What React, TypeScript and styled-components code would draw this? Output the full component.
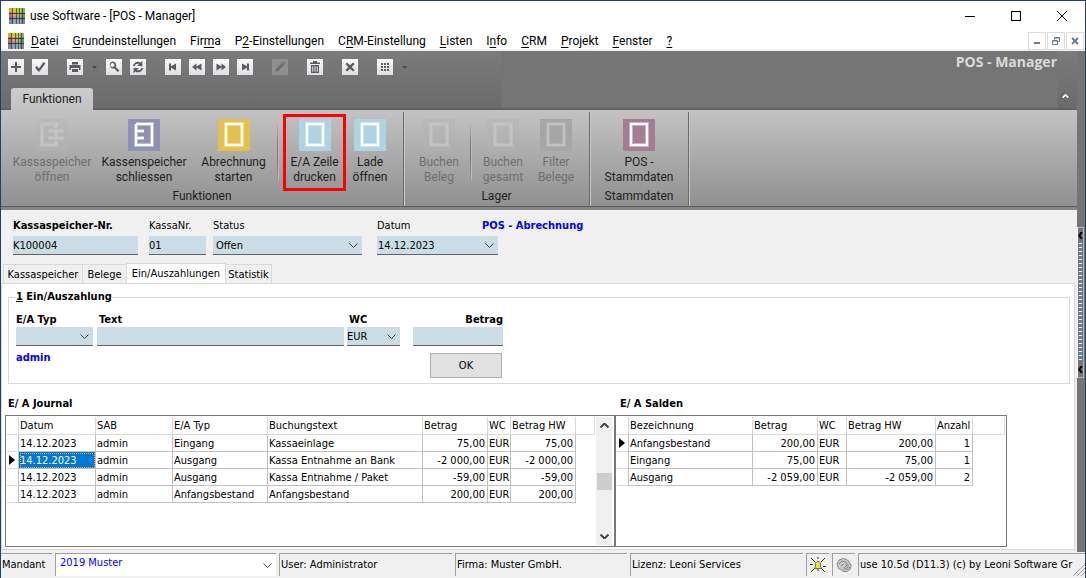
import React from "react";
import styled, { createGlobalStyle, css } from "styled-components";

const ui = `Roboto, "Open Sans", sans-serif`;
const form = `"DejaVu Sans Condensed", "DejaVu Sans", sans-serif`;
const c = {
  edge: "#1d4468",
  face: "#f0f0f0",
  dark: "#757575",
  line: "#d9d9d9",
  field: "#cadde6",
  rule: "#646464",
  blue: "#0000ff",
  grid: "#c0c0c0",
};

const Global = createGlobalStyle`
  * { box-sizing: border-box; }
  body { margin: 0; background: ${c.face}; color: #000; font: 11px/16px ${form}; }
  button, input, select { font: inherit; color: inherit; margin: 0; border-radius: 0; }
  button { padding: 0; border: 0; background: none; }
  svg { display: block; flex: none; }
`;

const Window = styled.div`
  display: flex;
  flex-direction: column;
  min-height: 100vh;
  border: 1px solid ${c.edge};
  background: ${c.face};
  overflow: hidden;
`;

/* ---------- title and menu ---------- */
const TitleBar = styled.header`
  display: flex;
  align-items: center;
  height: 30px;
  padding-left: 8px;
  background: #fff;
  font: 12px/16px ${ui};
`;
const Title = styled.h1`
  margin: 0 0 0 5px;
  flex: 1;
  font: inherit;
`;
const Caption = styled.button`
  width: 46px;
  height: 30px;
  display: flex;
  align-items: center;
  justify-content: center;
`;
const MenuBar = styled.nav`
  display: flex;
  align-items: center;
  height: 20px;
  padding: 1px 1px 0 7px;
  background: #fff;
  border-bottom: 2px solid ${c.face};
  font: 12px/16px ${ui};
`;
const MenuItem = styled.button`
  padding: 0 7px;
  white-space: nowrap;
  u { text-underline-offset: 2px; }
`;
const MdiButtons = styled.div`
  display: flex;
  gap: 1px;
  margin-left: auto;
`;
const MdiButton = styled.button`
  width: 18px;
  height: 18px;
  border: 1px solid #dcdcdc;
  display: flex;
  align-items: center;
  justify-content: center;
`;

/* ---------- body ---------- */
const Body = styled.div`
  flex: 1;
  display: flex;
`;
const Main = styled.div`
  flex: 1;
  min-width: 0;
  display: flex;
  flex-direction: column;
`;
const RibbonTop = styled.div`
  display: flex;
  height: 59px;
  background: ${c.dark};
  border-bottom: 2px solid #616161;
`;
const ToolArea = styled.div`
  width: 500px;
  display: flex;
  flex-direction: column;
  justify-content: space-between;
  padding: 8px 7px 0;
  background: linear-gradient(#7b7b7b, #6b6b6b);
`;
const Tools = styled.div`
  display: flex;
  gap: 19px;
`;
const ToolGroup = styled.div`
  display: flex;
  gap: 8px;
`;
const Tool = styled.button<{ $off?: boolean }>`
  width: 16px;
  height: 16px;
  background: ${(p) => (p.$off ? "#8f8f8f" : "linear-gradient(#fafafa, #dedfe3)")};
  color: ${(p) => (p.$off ? "#6e6e6e" : "#5c5c60")};
`;
const DropArrow = styled.button`
  width: 7px;
  height: 16px;
  display: flex;
  align-items: center;
  justify-content: center;
`;
const RibbonTab = styled.button`
  align-self: flex-start;
  width: 82px;
  height: 22px;
  margin: 0 0 -2px 3px;
  border-radius: 3px 3px 0 0;
  background: linear-gradient(#cccccc, #c2c2c2);
  color: #1e1e1e;
  font: 12px/22px ${ui};
`;
const ModuleTitle = styled.div`
  flex: 1;
  text-align: right;
  color: #dadada;
  font: bold 14px/22px "Open Sans", sans-serif;
`;
const Collapse = styled.button`
  width: 20px;
  display: flex;
  justify-content: center;
  padding: 42px 3px 0 0;
  background: linear-gradient(#7b7b7b, #6b6b6b);
`;

const Ribbon = styled.div`
  display: flex;
  height: 97px;
  background: linear-gradient(#c3c3c3, #909090);
  border-bottom: 1px solid #5a5a5a;
`;
const RibbonFoot = styled.div`
  height: 3px;
  background: #858585;
`;
const Group = styled.section<{ $w: number }>`
  width: ${(p) => p.$w}px;
  margin-top: 2px;
  border-right: 1px solid #6a6a6a;
  box-shadow: 1px 0 #c9c9c9;
`;
const GroupItems = styled.div<{ $pad?: number }>`
  display: flex;
  height: 77px;
  padding: 2px 0 0 ${(p) => p.$pad ?? 0}px;
`;
const GroupLabel = styled.div`
  text-align: center;
  color: #1e1e1e;
  font: 12px/15px ${ui};
`;
const BigButton = styled.button<{ $w: number; $marked?: boolean }>`
  width: ${(p) => p.$w}px;
  height: 77px;
  display: flex;
  flex-direction: column;
  align-items: center;
  padding-top: ${(p) => (p.$marked ? 2 : 5)}px;
  gap: 4px;
  color: #1e1e1e;
  font: 12px/15px ${ui};
  white-space: pre;
  ${(p) => p.$marked && css`border: 3px solid #ff0000; margin-left: 4px;`}
  &:disabled { color: #6f6f6f; }
`;
const ItemSep = styled.div`
  width: 2px;
  height: 56px;
  margin-top: 10px;
  background: linear-gradient(#b4b4b4, #777 40%, #777 60%, #9a9a9a);
  border-right: 1px solid #bcbcbc;
`;

/* ---------- head fields ---------- */
const Head = styled.div`
  display: grid;
  grid-template-columns: 136px 64px 164px 105px 1fr;
  grid-template-rows: 18px auto;
  height: 53px;
  padding: 8px 0 0 12px;
`;
const Label = styled.label<{ $b?: boolean; $end?: boolean; $in?: boolean }>`
  font-weight: ${(p) => (p.$b ? "bold" : "normal")};
  text-align: ${(p) => (p.$end ? "right" : "left")};
  padding-left: ${(p) => (p.$in ? 2 : 0)}px;
  white-space: nowrap;
`;
const Blue = styled.span`
  color: ${c.blue};
  font-weight: bold;
`;
const fieldBox = css<{ $w: number }>`
  width: ${(p) => p.$w}px;
  height: 19px;
  border: 0;
  border-bottom: 1px solid ${c.rule};
  background: ${c.field};
  outline: none;
`;
const Input = styled.input<{ $w: number }>`
  ${fieldBox}
  padding: 0;
`;
const Combo = styled.div<{ $w: number }>`
  ${fieldBox}
  position: relative;
  svg {
    position: absolute;
    right: 4px;
    top: 7px;
    pointer-events: none;
  }
`;
const Select = styled.select<{ $in?: number }>`
  appearance: none;
  display: block;
  width: 100%;
  height: 100%;
  border: 0;
  padding: 1px 0 0 ${(p) => p.$in ?? 1}px;
  background: none;
  outline: none;
`;

/* ---------- tabs ---------- */
const Tabs = styled.div`
  display: flex;
  align-items: flex-end;
  padding-left: 2px;
`;
const Tab = styled.button<{ $w: number; $on?: boolean }>`
  width: ${(p) => p.$w}px;
  height: ${(p) => (p.$on ? 21 : 19)}px;
  margin-bottom: ${(p) => (p.$on ? -1 : 0)}px;
  padding-top: ${(p) => (p.$on ? 0 : 2)}px;
  border: 1px solid ${c.line};
  border-bottom: 0;
  border-left-width: ${(p) => (p.$on ? 1 : 0)}px;
  background: ${(p) => (p.$on ? "#fff" : c.face)};
  white-space: nowrap;
  &:first-child { border-left-width: 1px; }
  &:nth-child(2) { border-right: 0; }
`;
const Page = styled.div`
  flex: 1;
  margin: 0 2px 2px 0;
  border: 1px solid ${c.line};
  padding: 4px 4px 2px 3px;
  background: #fff;
`;
const Booking = styled.fieldset`
  margin: 0 0 0 3px;
  height: 96px;
  border: 1px solid ${c.line};
  padding: 6px 7px 0;
  min-width: 0;
`;
const Legend = styled.legend`
  padding: 0;
  line-height: 18px;
  font-weight: bold;
`;
const EntryRow = styled.div`
  display: flex;
  align-items: flex-start;
  height: 33px;
`;
const Cell = styled.div<{ $w: number; $gap: number }>`
  display: flex;
  flex-direction: column;
  width: ${(p) => p.$w}px;
  margin-right: ${(p) => p.$gap}px;
  line-height: 15px;
`;
const Confirm = styled.div`
  display: flex;
  justify-content: space-between;
  width: 486px;
  padding-top: 5px;
`;
const OkButton = styled.button`
  width: 72px;
  height: 25px;
  margin-top: 3px;
  border: 1px solid #adadad;
  background: #e1e1e1;
`;

/* ---------- grids ---------- */
const Lists = styled.div`
  display: flex;
  padding-top: 11px;
`;
const List = styled.section<{ $w: number }>`
  width: ${(p) => p.$w}px;
`;
const ListTitle = styled.h2<{ $pad: number }>`
  margin: 0;
  padding: 0 0 3px ${(p) => p.$pad}px;
  font-size: 11px;
  line-height: 17px;
`;
const Frame = styled.div`
  display: flex;
  justify-content: space-between;
  height: 132px;
  border: 1px solid #787878;
  padding: 1px;
`;
const Table = styled.table`
  table-layout: fixed;
  align-self: flex-start;
  border-spacing: 0;
  white-space: nowrap;
  th, td {
    height: 17px;
    padding: 2px 2px 0 1px;
    line-height: 14px;
    overflow: hidden;
    text-align: left;
    font-weight: normal;
    border: solid ${c.grid};
    border-width: 0 1px 1px 0;
  }
  th {
    height: 18px;
    padding-top: 1px;
    line-height: 16px;
    border-color: ${c.line};
  }
  td:last-child { border: 0; }
  td:first-child {
    padding: 0 0 0 2px;
    border-bottom-color: ${c.line};
  }
`;
const Td = styled.td<{ $end?: boolean; $sel?: boolean }>`
  &&& {
    text-align: ${(p) => (p.$end ? "right" : "left")};
    ${(p) => p.$sel && css`
      background: #0078d7;
      color: #fff;
      outline: 1px dotted #ffa040;
      outline-offset: -2px;
    `}
  }
`;
const ScrollBar = styled.div`
  width: 16px;
  margin-right: 1px;
  display: flex;
  flex-direction: column;
  align-items: center;
  justify-content: space-between;
  padding: 6px 0;
  background: ${c.face};
`;
const Thumb = styled.div`
  width: 15px;
  height: 17px;
  background: #cdcdcd;
`;

/* ---------- splitter and status ---------- */
const Splitter = styled.aside`
  width: 8px;
  background: ${c.dark};
  display: flex;
  flex-direction: column;
  padding-top: 176px;
`;
const SplitHandle = styled.button`
  width: 7px;
  height: 151px;
  display: flex;
  flex-direction: column;
  align-items: center;
  justify-content: space-between;
  padding: 4px 0;
  border: 1px solid #b5b5b5;
  border-left-color: #fff;
`;
const Dots = styled.div`
  width: 3px;
  height: 120px;
  background: repeating-linear-gradient(#fff 0 1px, #757575 1px 2px, #3f8fd0 2px 3px, #757575 3px 4px);
`;
const Status = styled.footer`
  display: flex;
  gap: 3px;
  height: 26px;
  padding-top: 1px;
`;
const StatusPanel = styled.div<{ $w?: number; $icon?: boolean }>`
  ${(p) => (p.$w ? css`width: ${p.$w}px; flex: none;` : css`flex: 1; min-width: 0;`)}
  height: 23px;
  display: flex;
  align-items: center;
  justify-content: ${(p) => (p.$icon ? "center" : "flex-start")};
  padding-left: ${(p) => (p.$icon ? 0 : 1)}px;
  border-left: 1px solid #a0a0a0;
  border-top: 1px solid #a0a0a0;
  white-space: nowrap;
  overflow: hidden;
  &:first-child { border-left: 0; }
`;
const StatusText = styled.span`
  flex: 1;
  min-width: 0;
`;
const ClientCombo = styled(Combo)`
  height: 23px;
  border: solid #a0a0a0;
  border-width: 1px 0 0 1px;
  background: #fff;
  color: ${c.blue};
  select { padding: 0 4px 4px; }
  svg { top: 9px; }
`;

/* ---------- drawings ---------- */
const Logo = () => (
  <svg width="16" height="16" viewBox="0 0 16 16">
    {[
      ["#d9a441", "#c6cf1d", "#a9cc3c", "#8fae6a"],
      ["#c9803e", "#dc9a86", "#b7b45c", "#6e9f5a"],
      ["#9b6e8c", "#b98fa6", "#93a8a8", "#5f9470"],
      ["#7f86ad", "#83a4c2", "#7fb0bb", "#8a7fa8"],
    ].map((row, y) =>
      row.map((f, x) => <rect key={`${x}${y}`} x={x * 4} y={y * 4} width="4" height="4" fill={f} />)
    )}
    <path d="M3.5 0V16M7.5 0V16M10.5 0V16M13.5 0V16" stroke="#2c2326" strokeOpacity="0.6" fill="none" />
    <path d="M0 5.5H16M0 10.5H16" stroke="#2c2326" strokeOpacity="0.8" fill="none" />
  </svg>
);
const Chevron = ({ d = "M0.5 0.5L4.5 4.5L8.5 0.5", w }: { d?: string; w?: number }) => (
  <svg width="9" height="5" viewBox="0 0 9 5" fill="none" stroke="#444" strokeWidth={w}>
    <path d={d} />
  </svg>
);
const Arrow = () => (
  <svg width="5" height="3" viewBox="0 0 5 3"><path d="M0 0H5L2.5 3Z" fill="#4a4a4a" /></svg>
);
const Glyph = ({ children }: { children: React.ReactNode }) => (
  <svg width="16" height="16" viewBox="0 0 16 16" fill="currentColor" stroke="none">{children}</svg>
);
const glyphs: Record<string, React.ReactNode> = {
  Neu: <path d="M7 3H9V7H13V9H9V13H7V9H3V7H7Z" />,
  Speichern: <path d="M3 8.5L5 7L7 9.5L11.5 3L13.5 4.2L7.5 12.5H6.3Z" />,
  Drucken: <path d="M5 3H11V5.5H5ZM2.5 6H13.5V11H12V9H4V11H2.5ZM5 10H11V13H5Z" />,
  Suchen: <path d="M6.5 2.5A3.5 3.5 0 1 0 8.3 9.4L11.8 13L13.5 11.4L9.7 7.9A3.5 3.5 0 0 0 6.5 2.5ZM6.5 4A2 2 0 1 1 6.5 8A2 2 0 0 1 6.5 4Z" />,
  Aktualisieren: <path d="M3 7C3.5 3.2 7.8 1.6 10.6 3.6L12.4 1.8V7H7.2L9.1 5.1C7.3 4.2 5.2 5.1 4.8 7ZM13 9C12.5 12.8 8.2 14.4 5.4 12.4L3.6 14.2V9H8.8L6.9 10.9C8.7 11.8 10.8 10.9 11.2 9Z" />,
  Erster: <path d="M4 4.5H6V7.3L11 4.5V11.5L6 8.7V11.5H4Z" />,
  Zurück: <path d="M3 8L7.5 4.5V7.5L12.5 4.5V11.5L7.5 8.5V11.5Z" />,
  Vor: <path d="M13 8L8.5 4.5V7.5L3.5 4.5V11.5L8.5 8.5V11.5Z" />,
  Letzter: <path d="M12 4.5H10V7.3L5 4.5V11.5L10 8.7V11.5H12Z" />,
  Bearbeiten: <path d="M3 13L4 9.8L10 3.8L12.2 6L6.2 12ZM10.6 3.2L11.6 2.3L13.7 4.4L12.8 5.4Z" />,
  Löschen: <path fillRule="evenodd" d="M6 2H10V3.5H13V5H3V3.5H6ZM4 6H12V14H4ZM5.3 7.2V12.8H6.3V7.2ZM7.5 7.2V12.8H8.5V7.2ZM9.7 7.2V12.8H10.7V7.2Z" />,
  Abbrechen: <path d="M5 3.5L8 6.3L11 3.5L12.6 5L9.7 8L12.6 11L11 12.5L8 9.7L5 12.5L3.4 11L6.3 8L3.4 5Z" />,
  Ansicht: <path d="M4 4H6V6H4ZM7 4H9V6H7ZM10 4H12V6H10ZM4 7H6V9H4ZM7 7H9V9H7ZM10 7H12V9H10ZM4 10H6V12H4ZM7 10H9V12H7ZM10 10H12V12H10Z" />,
};
const shapes = {
  box: "M8 5H24V26H8Z",
  close: "M8 5H24V26H8V5M8 12H16M8 19H16",
  open: "M20 9V5H6V26H20V22M12 12H28M12 19H28M20 12V19",
};
const Tile = ({ fill, shape = "box", off }: { fill: string; shape?: keyof typeof shapes; off?: boolean }) => (
  <svg width="32" height="32" viewBox="0 0 32 32" fill="none">
    <rect width="32" height="32" fill={fill} />
    <path d={shapes[shape]} stroke="#fff" strokeOpacity={off ? 0.12 : 0.4} strokeWidth="4" />
    <path d={shapes[shape]} stroke={off ? "#c3c3c3" : "#fff"} strokeWidth="2" />
  </svg>
);

/* ---------- data ---------- */
const menus: [string, string, string][] = [
  ["", "D", "atei"], ["", "G", "rundeinstellungen"], ["Fir", "m", "a"], ["P", "2", "-Einstellungen"],
  ["C", "R", "M-Einstellung"], ["", "L", "isten"], ["I", "n", "fo"], ["", "C", "RM"],
  ["", "P", "rojekt"], ["", "F", "enster"], ["", "?", ""],
];
const journal = [
  ["14.12.2023", "admin", "Eingang", "Kassaeinlage", "75,00", "EUR", "75,00"],
  ["14.12.2023", "admin", "Ausgang", "Kassa Entnahme an Bank", "-2 000,00", "EUR", "-2 000,00"],
  ["14.12.2023", "admin", "Ausgang", "Kassa Entnahme / Paket", "-59,00", "EUR", "-59,00"],
  ["14.12.2023", "admin", "Anfangsbestand", "Anfangsbestand", "200,00", "EUR", "200,00"],
];
const balances = [
  ["Anfangsbestand", "200,00", "EUR", "200,00", "1"],
  ["Eingang", "75,00", "EUR", "75,00", "1"],
  ["Ausgang", "-2 059,00", "EUR", "-2 059,00", "2"],
];

const Grid = ({ cols, heads, rows, end, current, selected }: {
  cols: number[]; heads: string[]; rows: string[][]; end: number[]; current: number; selected?: boolean;
}) => (
  <Table style={{ width: cols.reduce((a, b) => a + b, 0) }}>
    <colgroup>{cols.map((w, i) => <col key={i} style={{ width: w }} />)}</colgroup>
    <thead>
      <tr><th />{heads.map((h) => <th key={h}>{h}</th>)}<th /></tr>
    </thead>
    <tbody>
      {rows.map((r, y) => (
        <tr key={y}>
          <td>
            {y === current && (
              <svg width="6" height="10" viewBox="0 0 6 10"><path d="M0 0L6 5L0 10Z" /></svg>
            )}
          </td>
          {r.map((t, x) => (
            <Td key={x} $end={end.includes(x)} $sel={selected && y === current && x === 0}>{t}</Td>
          ))}
          <td />
        </tr>
      ))}
    </tbody>
  </Table>
);

const ToolButton = ({ name, off }: { name: string; off?: boolean }) => (
  <Tool aria-label={name} $off={off}><Glyph>{glyphs[name]}</Glyph></Tool>
);

export default function App() {
  return (
    <Window>
      <Global />
      <TitleBar>
        <Logo />
        <Title>use Software - [POS - Manager]</Title>
        <Caption aria-label="Minimieren">
          <svg width="10" height="10"><path d="M0 5.5H10" stroke="#000" /></svg>
        </Caption>
        <Caption aria-label="Maximieren">
          <svg width="10" height="10"><rect x="0.5" y="0.5" width="9" height="9" fill="none" stroke="#000" /></svg>
        </Caption>
        <Caption aria-label="Schließen">
          <svg width="10" height="10"><path d="M0 0L10 10M10 0L0 10" stroke="#000" /></svg>
        </Caption>
      </TitleBar>
      <MenuBar>
        <Logo />
        {menus.map(([a, k, b]) => <MenuItem key={a + k + b}>{a}<u>{k}</u>{b}</MenuItem>)}
        <MdiButtons>
          <MdiButton aria-label="Fenster minimieren">
            <svg width="8" height="8"><path d="M1 6H7" stroke="#6b7c8c" strokeWidth="2" /></svg>
          </MdiButton>
          <MdiButton aria-label="Fenster wiederherstellen">
            <svg width="8" height="8" fill="none" stroke="#6b7c8c">
              <path d="M2.5 2.5V0.5H7.5V4.5H6M0.5 3.5H5.5V7.5H0.5ZM2.5 1H7.5M0.5 4H5.5" />
            </svg>
          </MdiButton>
          <MdiButton aria-label="Fenster schließen">
            <svg width="8" height="8"><path d="M1 1L7 7M7 1L1 7" stroke="#6b7c8c" strokeWidth="2" /></svg>
          </MdiButton>
        </MdiButtons>
      </MenuBar>

      <Body>
        <Main>
          <RibbonTop>
            <ToolArea>
              <Tools>
                <ToolGroup><ToolButton name="Neu" /><ToolButton name="Speichern" /></ToolGroup>
                <ToolGroup>
                  <ToolButton name="Drucken" />
                  <DropArrow aria-label="Druckoptionen"><Arrow /></DropArrow>
                  <ToolButton name="Suchen" /><ToolButton name="Aktualisieren" />
                </ToolGroup>
                <ToolGroup>
                  <ToolButton name="Erster" /><ToolButton name="Zurück" />
                  <ToolButton name="Vor" /><ToolButton name="Letzter" />
                </ToolGroup>
                <ToolGroup><ToolButton name="Bearbeiten" off /></ToolGroup>
                <ToolGroup><ToolButton name="Löschen" /></ToolGroup>
                <ToolGroup><ToolButton name="Abbrechen" /></ToolGroup>
                <ToolGroup>
                  <ToolButton name="Ansicht" />
                  <DropArrow aria-label="Ansichtsoptionen"><Arrow /></DropArrow>
                </ToolGroup>
              </Tools>
              <RibbonTab>Funktionen</RibbonTab>
            </ToolArea>
            <ModuleTitle>POS - Manager</ModuleTitle>
            <Collapse aria-label="Menüband einklappen">
              <svg width="9" height="6" viewBox="0 0 9 6" fill="none">
                <path d="M1 5L4.5 1.8L8 5" stroke="#333" strokeWidth="3" />
                <path d="M1.5 4.7L4.5 1.8L7.5 4.7" stroke="#fff" strokeWidth="2" />
              </svg>
            </Collapse>
          </RibbonTop>

          <Ribbon>
            <Group $w={403}>
              <GroupItems $pad={5}>
                <BigButton $w={92} disabled><Tile fill="#b4b4b466" shape="open" off />{"Kassaspeicher\nöffnen"}</BigButton>
                <BigButton $w={92}><Tile fill="#8f90b6" shape="close" />{"Kassenspeicher\nschliessen"}</BigButton>
                <BigButton $w={87}><Tile fill="#e6c04c" />{"Abrechnung\nstarten"}</BigButton>
                <ItemSep />
                <BigButton $w={63} $marked><Tile fill="#aed3e2" />{"E/A Zeile\ndrucken"}</BigButton>
                <BigButton $w={48}><Tile fill="#aed3e2" />{"Lade\nöffnen"}</BigButton>
              </GroupItems>
              <GroupLabel>Funktionen</GroupLabel>
            </Group>
            <Group $w={186}>
              <GroupItems $pad={4}>
                <BigButton $w={62} disabled><Tile fill="#b2b2b266" off />{"Buchen\nBeleg"}</BigButton>
                <ItemSep />
                <BigButton $w={62} disabled><Tile fill="#b2b2b266" off />{"Buchen\ngesamt"}</BigButton>
                <BigButton $w={44} disabled><Tile fill="#a6a6a6" off />{"Filter\nBelege"}</BigButton>
              </GroupItems>
              <GroupLabel>Lager</GroupLabel>
            </Group>
            <Group $w={99}>
              <GroupItems>
                <BigButton $w={98}><Tile fill="#a67b94" />{"POS -\nStammdaten"}</BigButton>
              </GroupItems>
              <GroupLabel>Stammdaten</GroupLabel>
            </Group>
          </Ribbon>
          <RibbonFoot />

          <Head>
            <Label $b htmlFor="nr">Kassaspeicher-Nr.</Label>
            <Label htmlFor="kassa">KassaNr.</Label>
            <Label htmlFor="status">Status</Label>
            <Label htmlFor="datum">Datum</Label>
            <Blue>POS - Abrechnung</Blue>
            <Input id="nr" $w={125} defaultValue="K100004" />
            <Input id="kassa" $w={57} defaultValue="01" />
            <Combo $w={149}><Select id="status" $in={3}><option>Offen</option></Select><Chevron /></Combo>
            <Combo $w={121}><Select id="datum"><option>14.12.2023</option></Select><Chevron /></Combo>
          </Head>

          <Tabs>
            <Tab $w={80}>Kassaspeicher</Tab>
            <Tab $w={43}>Belege</Tab>
            <Tab $w={100} $on>Ein/Auszahlungen</Tab>
            <Tab $w={46}>Statistik</Tab>
          </Tabs>

          <Page>
            <Booking>
              <Legend><u>1</u> Ein/Auszahlung</Legend>
              <EntryRow>
                <Cell $w={77} $gap={4}>
                  <Label $b htmlFor="typ">E/A Typ</Label>
                  <Combo $w={77}><Select id="typ"><option /></Select><Chevron /></Combo>
                </Cell>
                <Cell $w={247} $gap={3}>
                  <Label $b $in htmlFor="text">Text</Label>
                  <Input id="text" $w={247} />
                </Cell>
                <Cell $w={53} $gap={13}>
                  <Label $b $in htmlFor="wc">WC</Label>
                  <Combo $w={53}><Select id="wc" $in={0}><option>EUR</option></Select><Chevron /></Combo>
                </Cell>
                <Cell $w={90} $gap={0}>
                  <Label $b $end htmlFor="betrag">Betrag</Label>
                  <Input id="betrag" $w={90} />
                </Cell>
              </EntryRow>
              <Confirm><Blue>admin</Blue><OkButton>OK</OkButton></Confirm>
            </Booking>

            <Lists>
              <List $w={610}>
                <ListTitle $pad={3}>E/ A Journal</ListTitle>
                <Frame>
                  <Grid
                    cols={[12, 77, 77, 95, 155, 65, 23, 65, 19]}
                    heads={["Datum", "SAB", "E/A Typ", "Buchungstext", "Betrag", "WC", "Betrag HW"]}
                    rows={journal} end={[4, 6]} current={1} selected
                  />
                  <ScrollBar>
                    <Chevron d="M0.5 4.5L4.5 0.5L8.5 4.5" w={2} />
                    <Thumb />
                    <Chevron w={2} />
                  </ScrollBar>
                </Frame>
              </List>
              <List $w={392}>
                <ListTitle $pad={5}>E/ A Salden</ListTitle>
                <Frame>
                  <Grid
                    cols={[12, 124, 65, 29, 89, 37, 32]}
                    heads={["Bezeichnung", "Betrag", "WC", "Betrag HW", "Anzahl"]}
                    rows={balances} end={[1, 3, 4]} current={0}
                  />
                </Frame>
              </List>
            </Lists>
          </Page>
        </Main>
        <Splitter>
          <SplitHandle aria-label="Seitenleiste">
            <svg width="5" height="7"><path d="M4 0L1 3.5L4 7" fill="none" stroke="#000" strokeWidth="2" /></svg>
            <Dots />
            <svg width="5" height="7"><path d="M4 0L1 3.5L4 7" fill="none" stroke="#000" strokeWidth="2" /></svg>
          </SplitHandle>
        </Splitter>
      </Body>

      <Status>
        <StatusPanel $w={51}><label htmlFor="mandant">Mandant</label></StatusPanel>
        <ClientCombo $w={221}><Select id="mandant"><option>2019 Muster</option></Select><Chevron /></ClientCombo>
        <StatusPanel $w={173}>User: Administrator</StatusPanel>
        <StatusPanel $w={172}>Firma: Muster GmbH.</StatusPanel>
        <StatusPanel $w={173}>Lizenz: Leoni Services</StatusPanel>
        <StatusPanel $w={23} $icon>
          <svg width="16" height="16" viewBox="0 0 16 16" fill="none" stroke="#333">
            <path d="M1 1L5 5M15 1L11 5M1 15L5 11M15 15L11 11M0 7.5H3M13 9.5H16M8 0V2" />
            <path d="M4.5 11.5H11.5L10.5 9V6L9 4.5H7L5.5 6V9Z" fill="#e8e337" stroke="#77733a" />
            <path d="M7 13H9" />
          </svg>
        </StatusPanel>
        <StatusPanel $w={23} $icon>
          <svg width="16" height="16" viewBox="0 0 16 16" fill="#c9c9c9" stroke="#8a8a8a">
            <path d="M1 7L3 3L7 1.5L11 2.5L13 5L15 8L14.5 12L11 14.5H7L5 12.5L2.5 11.5Z" />
            <path d="M3 7L6 4L10 5L11 8L8 11M5 9L8 7M7 13L12 10L12 7M10 13L14 10" fill="none" />
          </svg>
        </StatusPanel>
        <StatusPanel>
          <StatusText>use 10.5d (D11.3) (c) by Leoni Software Gr</StatusText>
          <svg width="12" height="22" viewBox="0 0 12 22" stroke="#a0a0a0"><path d="M0 22L12 10M4 22L12 14M8 22L12 18" /></svg>
        </StatusPanel>
      </Status>
    </Window>
  );
}
